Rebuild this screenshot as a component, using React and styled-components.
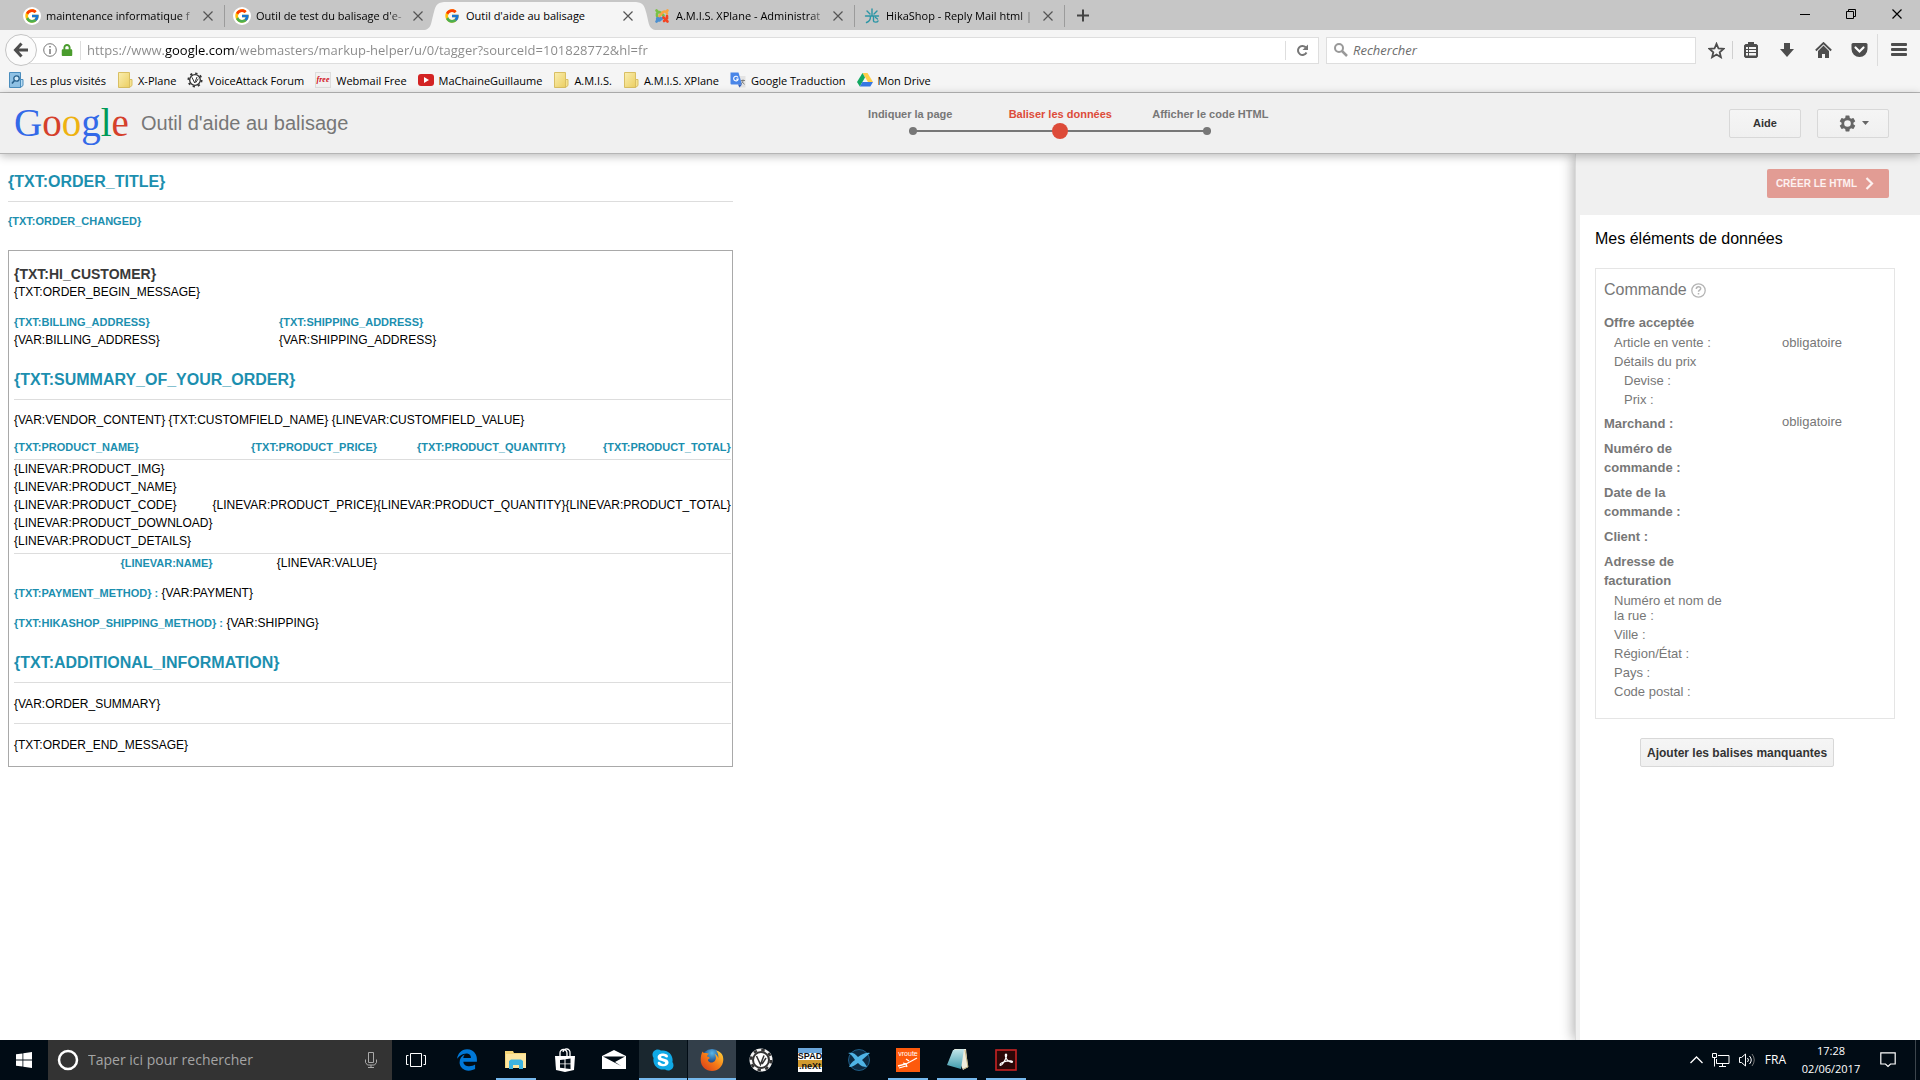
import React, { useState } from 'react';
import styled, { createGlobalStyle, css } from 'styled-components';
import { FcGoogle } from 'react-icons/fc';
import { FaSkype, FaLock } from 'react-icons/fa';
import { FaEdgeLegacy } from 'react-icons/fa6';

// --- THEME ---
const THEME = {
    chrome: '#f5f5f5',
    tabStrip: '#c6c6c6',
    icon: '#4d4d4d',
    teal: '#1c8faf',
    grey: '#777777',
    red: '#dd4b39',
    line: '#dddddd',
    taskbar: '#010c15',
    ui: "'Open Sans', 'Noto Sans', sans-serif",
    page: "'Liberation Sans', Arial, sans-serif"
};

const GlobalStyle = createGlobalStyle`
    * { box-sizing: border-box; }
    body { margin: 0; font-family: ${THEME.page}; font-size: 12px; background: #fff; }
    button { font: inherit; color: inherit; background: none; border: 0; padding: 0; cursor: pointer; }
    input { font: inherit; border: 0; outline: 0; padding: 0; background: none; min-width: 0; }
    a { color: inherit; text-decoration: none; }
    h1, h2, h3, p { margin: 0; }
    svg { display: block; flex: none; }
`;

const Screen = styled.div`
    display: flex;
    flex-direction: column;
    min-height: 100vh;
`;

// --- BROWSER CHROME ---
const TabStrip = styled.div`
    display: flex;
    height: 30px;
    padding-left: 15px;
    background: ${THEME.tabStrip};
    font: 11px ${THEME.ui};
`;

const Tab = styled.div`
    position: relative;
    display: flex;
    align-items: center;
    gap: 6px;
    width: 210px;
    padding: 1px 12px 0 9px;
    ${({ $divider }) => $divider && css`
        background: linear-gradient(#9b9b9b, #9b9b9b) right 5px / 1px 22px no-repeat;
    `}
    ${({ $active }) => $active && css`
        z-index: 1;
        &::before {
            content: '';
            position: absolute;
            inset: 2px 11px 0;
            background: ${THEME.chrome};
        }
    `}
    > * { position: relative; }
`;

const TabEdge = styled.svg`
    && { position: absolute; top: 2px; }
    ${({ $side }) => ($side === 'left' ? 'left: -12px;' : 'right: -12px; transform: scaleX(-1);')}
`;

const TabTitle = styled.button`
    flex: 1;
    overflow: hidden;
    white-space: nowrap;
    text-align: left;
    ${({ $fade }) => $fade && 'mask-image: linear-gradient(90deg, #000 88%, transparent);'}
`;

const GoogleFavicon = styled(FcGoogle)`
    border-radius: 50%;
    background: #fff;
    box-shadow: 0 0 0 1px #fff;
`;

const WindowButtons = styled.div`
    display: flex;
    align-items: flex-start;
    margin-left: auto;
    button { display: grid; place-items: center; width: 46px; height: 28px; }
`;

const Toolbar = styled.div`
    display: flex;
    align-items: center;
    height: 40px;
    padding: 0 1px 0 5px;
    background: ${THEME.chrome};
    font: 13px ${THEME.ui};
    color: ${THEME.icon};
`;

const BackButton = styled.button`
    display: grid;
    place-items: center;
    width: 32px;
    height: 32px;
    border: 1px solid #c4c4c4;
    border-radius: 50%;
    background: #fbfbfb;
    z-index: 1;
`;

const Field = styled.label`
    display: flex;
    align-items: center;
    height: 27px;
    border: 1px solid #dedede;
    background: #fff;
`;

const AddressField = styled(Field)`
    flex: 1;
    gap: 7px;
    margin-left: -10px;
    padding-left: 15px;
    svg + svg { margin-left: -3px; }
`;

// The gradient paints the domain darker than the rest of the address
const Address = styled.input`
    flex: 1;
    padding-left: 6px;
    border-left: 1px solid #dedede;
    color: transparent;
    caret-color: #000;
    background: linear-gradient(90deg, #888 83px, #000 83px 153px, #888 153px);
    background-clip: text;
    line-height: 19px;
`;

const Reload = styled.button`
    display: grid;
    place-items: center;
    width: 33px;
    height: 19px;
    border-left: 1px solid #dedede;
`;

const SearchField = styled(Field)`
    width: 370px;
    margin-left: 7px;
    padding: 0 7px;
    gap: 5px;
    input { flex: 1; }
    input::placeholder { color: #6d6d6d; font-style: italic; opacity: 1; }
`;

const ToolIcons = styled.div`
    display: flex;
    align-items: center;
    padding-left: 5px;
    button { display: grid; place-items: center; width: 36px; height: 32px; }
    button:first-child { width: 32px; border-right: 1px solid #d0d0d0; height: 18px; }
    button:last-child { width: 42px; border-left: 1px solid #dcdcdc; }
`;

const Bookmarks = styled.nav`
    display: flex;
    align-items: center;
    gap: 11px;
    height: 23px;
    padding: 0 9px 2px;
    background: ${THEME.chrome};
    border-bottom: 1px solid #b9b9b9;
    font: 11px ${THEME.ui};
    a { display: flex; align-items: center; gap: 5px; height: 20px; }
`;

// --- MARKUP HELPER HEADER ---
const AppHeader = styled.header`
    position: relative;
    z-index: 2;
    display: flex;
    align-items: center;
    height: 61px;
    padding: 0 31px 0 14px;
    background: #f0f0f0;
    border-bottom: 1px solid #b5b5b5;
    box-shadow: 0 2px 9px rgba(0, 0, 0, 0.28);
`;

const Logo = styled.a`
    width: 127px;
    font: 39px/48px 'Liberation Serif', serif;
    color: #3369e8;
    i { font-style: normal; color: #d5402b; }
    b { font-weight: normal; color: #eeb211; }
    em { font-style: normal; color: #009a57; }
`;

const AppTitle = styled.h1`
    font-size: 20px;
    font-weight: normal;
    color: ${THEME.grey};
`;

const Stepper = styled.div`
    width: 450px;
    margin: 0 auto 0 487px;
    font-size: 11px;
    font-weight: bold;
    color: ${THEME.grey};
`;

const StepLabels = styled.ol`
    display: grid;
    grid-template-columns: repeat(3, 1fr);
    margin: 0;
    padding: 0;
    list-style: none;
    text-align: center;
    white-space: nowrap;
    line-height: 14px;
`;

const StepLabel = styled.li`
    color: ${({ $current }) => ($current ? THEME.red : 'inherit')};
`;

const StepTrack = styled.div`
    display: flex;
    align-items: center;
    justify-content: space-between;
    width: 302px;
    height: 18px;
    margin: 1px auto 0;
    background: linear-gradient(${THEME.grey}, ${THEME.grey}) center / 100% 2px no-repeat;
`;

const StepDot = styled.span`
    width: ${({ $current }) => ($current ? 16 : 8)}px;
    height: ${({ $current }) => ($current ? 16 : 8)}px;
    border-radius: 50%;
    background: ${({ $current }) => ($current ? THEME.red : THEME.grey)};
`;

const GreyButton = styled.button`
    display: inline-flex;
    align-items: center;
    justify-content: center;
    gap: 5px;
    min-width: 72px;
    height: 29px;
    padding: 0 6px;
    border: 1px solid #d8d8d8;
    border-radius: 2px;
    background: linear-gradient(#f5f5f5, #f0f0f0);
    font-size: 11px;
    font-weight: bold;
    color: #333;
`;

const AddTagsButton = styled(GreyButton)`
    margin-left: 45px;
    font-size: 12px;
`;

const HeaderActions = styled.div`
    display: flex;
    gap: 16px;
`;

// --- TAGGED PAGE ---
const Workspace = styled.div`
    display: flex;
    flex: 1;
`;

const Mail = styled.main`
    flex: 1;
    padding: 17px 8px 16px;
    line-height: 18px;
`;

const MailBody = styled.div`
    width: fit-content;
    min-width: 721px;
`;

const Heading = styled.h2`
    padding-bottom: 8px;
    border-bottom: 1px solid ${THEME.line};
    font-size: 16px;
    line-height: 22px;
    color: ${THEME.teal};
`;

const Lead = styled.p`
    margin: 10px 0 20px;
`;

const Token = styled.strong`
    font-size: 11px;
    color: ${THEME.teal};
`;

const Frame = styled.section`
    padding: 14px 1px 2px 5px;
    border: 1px solid #a9a9a9;
`;

const Greeting = styled.h3`
    font-size: 14px;
    line-height: 18px;
    color: #393939;
`;

const Addresses = styled.div`
    display: grid;
    grid-template-columns: 265px 1fr;
    margin: 12px 0 20px;
    p { display: flex; flex-direction: column; }
`;

const Paragraph = styled.p`
    margin: 11px 0 12px;
`;

const Method = styled.p`
    margin-bottom: 12px;
    & + h2 { margin-top: 20px; }
`;

const Divided = styled.p`
    padding: 12px 0 10px;
    & + & { border-top: 1px solid ${THEME.line}; }
`;

const Products = styled.table`
    width: 100%;
    margin: -3px 0 12px;
    border-collapse: collapse;
    white-space: nowrap;
    th, td { padding: 0; text-align: right; }
    th { font-size: 11px; color: ${THEME.teal}; }
    thead th { padding-bottom: 3px; }
    th:first-child, tbody td:first-child { text-align: left; }
    tbody td { border: 1px solid ${THEME.line}; border-width: 1px 0; padding-bottom: 3px; }
    tfoot th:first-child { text-align: right; }
`;

// --- SIDEBAR ---
const Sidebar = styled.aside`
    display: flex;
    flex-direction: column;
    width: 345px;
    padding-left: 4px;
    background: #f0f0f0;
    border-left: 1px solid #dadada;
    box-shadow: -2px 0 12px rgba(0, 0, 0, 0.3);
`;

const SidebarTop = styled.div`
    display: flex;
    justify-content: flex-end;
    padding: 15px 31px 17px;
`;

const CreateButton = styled.button`
    display: flex;
    align-items: center;
    gap: 8px;
    height: 29px;
    padding: 0 15px 0 9px;
    border-radius: 2px;
    background: #e29c94;
    font-size: 10px;
    font-weight: bold;
    color: #fdf1f0;
`;

const Panel = styled.div`
    flex: 1;
    padding: 13px 25px 0 15px;
    background: #fff;
    color: ${THEME.grey};
`;

const PanelTitle = styled.h2`
    margin-bottom: 18px;
    font-size: 16px;
    font-weight: normal;
    line-height: 22px;
    color: #000;
`;

const DataCard = styled.div`
    margin-bottom: 19px;
    padding: 10px 9px 17px 8px;
    border: 1px solid #e5e5e5;
    h3 {
        display: flex;
        align-items: center;
        gap: 4px;
        margin-bottom: 12px;
        font-size: 16px;
        font-weight: normal;
        line-height: 22px;
    }
`;

const DataRow = styled.div`
    display: grid;
    grid-template-columns: 178px 1fr;
    font-size: 13px;
    line-height: 15px;
    padding: 2px 0;
    ${({ $level }) => $level === 0 && css`
        margin-top: 5px;
        padding: 0 0 1px;
        line-height: 19px;
        font-weight: bold;
    `}
    > span:first-child {
        padding-left: ${({ $level }) => $level * 10}px;
        padding-right: ${({ $level }) => ($level ? 50 : 70)}px;
    }
`;

const Required = styled.span`
    font-weight: normal;
    line-height: 15px;
`;

// --- TASKBAR ---
const Taskbar = styled.footer`
    position: relative;
    z-index: 3;
    display: flex;
    height: 40px;
    background: ${THEME.taskbar};
    color: #fff;
    font: 11px/18px ${THEME.ui};
`;

const StartButton = styled.button`
    display: grid;
    place-items: center;
    width: 48px;
`;

const TaskSearch = styled.label`
    display: flex;
    align-items: center;
    gap: 9px;
    width: 344px;
    padding: 0 15px 0 9px;
    background: #333;
    font-size: 14px;
    input { flex: 1; color: #fff; }
    input::placeholder { color: #a5a5a5; opacity: 1; }
`;

const TaskButton = styled.button`
    display: grid;
    place-items: center;
    width: 48px;
    margin-right: 1px;
    background:
        linear-gradient(#76b9ed, #76b9ed) bottom / ${({ $state }) => ($state ? ($state === 'open' ? '40px' : '48px') : '0')} 2px no-repeat,
        ${({ $state }) => ({ focus: '#333f4a', flash: '#1a272f' }[$state] || 'transparent')};
`;

const TaskViewButton = styled(TaskButton)`
    margin-right: 3px;
`;

const Skype = styled(FaSkype)`
    color: #10a9e6;
    background: radial-gradient(#fff 50%, transparent 51%);
`;

const Tray = styled.div`
    display: flex;
    align-items: center;
    margin-left: auto;
    gap: 9px;
    padding-right: 4px;
`;

const Language = styled.span`
    font-size: 12px;
`;

const Clock = styled.time`
    width: 72px;
    text-align: center;
`;

const Notifications = styled.button`
    width: 40px;
    height: 40px;
    display: grid;
    place-items: center;
    padding-right: 15px;
    border-right: 1px solid #3c454c;
`;

// --- ICONS ---
const Cross = ({ size = 10, color = '#555' }) => (
    <svg width={size} height={size} viewBox="0 0 10 10" stroke={color} strokeWidth="1.2">
        <path d="M0.5 0.5l9 9M9.5 0.5l-9 9" />
    </svg>
);

const Folder = () => (
    <svg width="16" height="16" viewBox="0 0 16 16">
        <defs>
            <linearGradient id="folder" x1="0" y1="0" x2="1" y2="1">
                <stop offset="0" stopColor="#faeeb0" />
                <stop offset="1" stopColor="#eccf62" />
            </linearGradient>
        </defs>
        <path d="M1.5 .5h11v15h-11z" fill="url(#folder)" stroke="#d9bf63" />
        <path d="M12.5 7.5h2.5v6l-2.500 2z" fill="#f6e391" stroke="#d9bf63" />
    </svg>
);

const MostVisited = () => (
    <svg width="16" height="16" viewBox="0 0 16 16">
        <path d="M.5 .5h11v15H.5z" fill="#8fc1e4" stroke="#4a8dbd" />
        <path d="M11.5 7.5H14v6l-2.5 2z" fill="#b9dcf2" stroke="#4a8dbd" />
        <circle cx="7.5" cy="6.5" r="2.7" fill="#cfe8f8" stroke="#255f8b" strokeWidth="1.3" />
        <path d="M5.500 8.500L3 11.500" stroke="#255f8b" strokeWidth="1.6" />
    </svg>
);

const VoiceGear = ({ size = 16, light }) => (
    <svg width={size} height={size} viewBox="0 0 24 24">
        {light && <circle cx="12" cy="12" r="11.5" fill="#f4f4f4" />}
        <circle cx="12" cy="12" r="8" fill="#fff" stroke="#333" strokeWidth="2" />
        <circle cx="12" cy="12" r="10" fill="none" stroke="#333" strokeWidth="2.6" strokeDasharray="3.4 4.45" />
        <path d="M7.5 8l4 8.5L15 7.5M13 16l4-6" fill="none" stroke="#333" strokeWidth="1.5" />
    </svg>
);

const FreeMail = () => (
    <svg width="16" height="16" viewBox="0 0 16 16">
        <rect x="0.5" y="0.5" width="15" height="15" fill="#f1f1f1" stroke="#ddd" />
        <text x="8" y="10" textAnchor="middle" fontFamily="Liberation Serif, serif" fontSize="8" fontStyle="italic" fontWeight="bold" fill="#d1121c">free</text>
    </svg>
);

const YouTube = () => (
    <svg width="16" height="16" viewBox="0 0 16 16">
        <rect y="2" width="16" height="12" rx="3" fill="#d32323" />
        <path d="M6 5l5 3-5 3z" fill="#fff" />
    </svg>
);

const Translate = () => (
    <svg width="16" height="16" viewBox="0 0 16 16">
        <path d="M6 4h9.5v11.5H9z" fill="#e3e3e3" />
        <path d="M0.5 0.5h8l3.5 12H1.5a1 1 0 0 1-1-1z" fill="#4a86e8" />
        <path d="M8 12.5h4L9.5 15.5z" fill="#3560bb" />
        <path d="M8 5.5a2.3 2.3 0 1 0 .2 1.6H6.2" fill="none" stroke="#fff" strokeWidth="1.1" />
        <path d="M11 8.5h4M13 7.5v1c0 2-1.5 3-2 3.5M12 9.5l2.5 3" stroke="#777" fill="none" strokeWidth=".9" />
    </svg>
);

const Drive = () => (
    <svg width="16" height="16" viewBox="0 0 16 16">
        <path d="M5.500 1h5l5.500 9h-5z" fill="#ffcf48" />
        <path d="M5.500 1L8 5.500 2.800 14.500 0 10z" fill="#11a861" />
        <path d="M5.400 10H16l-2.700 4.500H2.800z" fill="#3777e3" />
    </svg>
);

const Joomla = () => (
    <svg width="16" height="16" viewBox="0 0 16 16" fill="none" strokeWidth="2.6" strokeLinecap="round">
        <path d="M2.500 13.500L6 10M3.500 9.500c-1 2 0 3 2 3l3-2.500" stroke="#4c8fcf" />
        <path d="M3 8V5.500a2.500 2.500 0 0 1 3.500-1l3 3M2.500 2.500l1 1" stroke="#7ac143" />
        <path d="M12.500 3.500l1-1M5.500 8l3.500-4a2.500 2.500 0 0 1 4 1.500" stroke="#f9a541" />
        <path d="M9.500 9.500l4 4M13 8v2.500l-3 2.500" stroke="#f44321" />
    </svg>
);

const Hika = () => (
    <svg width="16" height="16" viewBox="0 0 16 16" fill="none" stroke="#2b95a5" strokeWidth="1.4" strokeLinecap="round">
        <path d="M8 1v6M3 3l3 3M13 3l-3 3M1.500 8h13M6.500 8.500c0 3-1 5-4 6M9.500 8.500v4.500c0 1.500 4 1.500 4.500 0M11.500 9.500l2 1.500" />
    </svg>
);

const Gear = () => (
    <svg width="19" height="19" viewBox="0 0 24 24" fill="#666">
        <path fillRule="evenodd" d="M19.43 12.98c.04-.32.07-.64.07-.98s-.03-.66-.07-.98l2.11-1.65c.19-.15.24-.42.12-.64l-2-3.46c-.12-.22-.39-.3-.61-.22l-2.49 1c-.52-.4-1.08-.73-1.69-.98l-.38-2.65A.49.49 0 0 0 14 2h-4c-.25 0-.46.18-.49.42l-.38 2.65c-.61.25-1.17.59-1.69.98l-2.49-1c-.23-.09-.49 0-.61.22l-2 3.46c-.13.22-.07.49.12.64l2.11 1.65c-.04.32-.07.65-.07.98s.03.66.07.98l-2.11 1.65c-.19.15-.24.42-.12.64l2 3.46c.12.22.39.3.61.22l2.49-1c.52.4 1.08.73 1.69.98l.38 2.65c.03.24.24.42.49.42h4c.25 0 .46-.18.49-.42l.38-2.65c.61-.25 1.17-.59 1.69-.98l2.49 1c.23.09.49 0 .61-.22l2-3.46c.12-.22.07-.49-.12-.64zM12 16.2a4.2 4.2 0 1 1 0-8.400 4.2 4.2 0 0 1 0 8.400z" />
    </svg>
);

const WindowsLogo = () => (
    <svg width="16" height="16" viewBox="0 0 16 16" fill="#fff">
        <path d="M0 2.3l6.500-.9v6.200H0zM7.300 1.300L16 0v7.600H7.300zM0 8.400h6.500v6.200L0 13.700zM7.300 8.400H16V16l-8.700-1.300z" />
    </svg>
);

const Explorer = () => (
    <svg width="22" height="20" viewBox="0 0 22 20">
        <path d="M0 1h8l1 2h12v15H0z" fill="#f5d576" />
        <path d="M1 4h20v14H1z" fill="#fde6a0" />
        <path d="M4 19v-8l2-1.500h10l2 1.500v8h-4v-4H8v4z" fill="#3db4e0" />
    </svg>
);

const Store = () => (
    <svg width="20" height="24" viewBox="0 0 20 24">
        <path d="M5 8V5a3.500 3.500 0 0 1 7 0v3M8 4a3.500 3.500 0 0 1 7 1v3" fill="none" stroke="#fff" strokeWidth="1.3" />
        <path d="M0 8h20l-1 14-9 2-9-2z" fill="#fff" />
        <path d="M5 12l4.500-.6v4H5zM10.500 11.300l5-.7v4.800h-5zM5 16.300h4.500v4L5 19.700zM10.500 16.300h5v4.800l-5-.7z" fill={THEME.taskbar} />
    </svg>
);

const MailApp = () => (
    <svg width="24" height="20" viewBox="0 0 24 20">
        <path d="M0 6l12-6 12 6v13H0z" fill="#fff" />
        <path d="M1 6.500h22L13 12l6 4-18-9.500z" fill={THEME.taskbar} />
    </svg>
);

const Firefox = () => (
    <svg width="24" height="24" viewBox="0 0 24 24">
        <defs>
            <linearGradient id="fox" x1="0" y1="1" x2="1" y2="0">
                <stop offset="0" stopColor="#d6341b" />
                <stop offset=".5" stopColor="#f47a17" />
                <stop offset="1" stopColor="#ffd83a" />
            </linearGradient>
            <radialGradient id="globe" cx=".5" cy=".2">
                <stop offset="0" stopColor="#59b8e8" />
                <stop offset="1" stopColor="#123a7c" />
            </radialGradient>
        </defs>
        <circle cx="12" cy="11.5" r="10.5" fill="url(#globe)" />
        <path d="M2.500 3.500c.5 1 1.500 1.500 3 1.500 1 0 2 .5 3.500.5-.5 1-2 1.500-2 3 2 0 3 1 2.500 2-1.500.5-2 1.500-1 2.800 2 2.200 5 1.200 6.500-.5 1.500-2 1-5-.5-7 2.500 1 3.500 3 3.700 4.500.6-3-.5-6-2.200-7.800C21 3.500 23.500 7 23.300 12c-.3 6.500-5.300 11-11.300 11S.7 18.500.7 12c0-3 .5-6 1.800-8.500z" fill="url(#fox)" />
    </svg>
);

const Spad = () => (
    <svg width="24" height="24" viewBox="0 0 24 24">
        <rect width="24" height="24" fill="#fff" />
        <rect width="24" height="5" fill="#6ba7dc" />
        <rect y="12" width="24" height="7" fill="#d19a2e" />
        <g fontFamily="Liberation Sans, sans-serif" fontWeight="bold" textAnchor="middle" fill="#111">
            <text x="12" y="11" fontSize="9">SPAD</text>
            <text x="12" y="21" fontSize="9">.neXt</text>
        </g>
    </svg>
);

const XPlane = () => (
    <svg width="24" height="24" viewBox="0 0 24 24">
        <circle cx="12" cy="12" r="10.5" fill="#0c2a42" stroke="#1e5d85" />
        <path d="M1 5c4-1 7 0 10 4 3-2 7-5 12-4l-8 7c3 3 4 5 5 7-4 0-6-1-9-4-3 2-5 4-9 4 1-3 3-5 6-7C6 9 4 6 1 5z" fill="#4fb4e6" />
    </svg>
);

const IRoute = () => (
    <svg width="24" height="24" viewBox="0 0 24 24">
        <rect width="24" height="24" fill="#fd5a0c" />
        <text x="12" y="8" textAnchor="middle" fontFamily="Liberation Sans, sans-serif" fontSize="7" fill="#fff">vroute</text>
        <path d="M2 18l8-2 11-6M7 15l3 1 1 3M13 13l-3-2M3 20l7-2" stroke="#fff" strokeWidth="1.3" fill="none" />
    </svg>
);

const Notepad = () => (
    <svg width="24" height="24" viewBox="0 0 24 24">
        <defs>
            <linearGradient id="sheet" x1="0" y1="0" x2="0" y2="1">
                <stop offset="0" stopColor="#c4e6ea" />
                <stop offset="1" stopColor="#3f9cae" />
            </linearGradient>
        </defs>
        <path d="M9 1h12l2 18-5 3z" fill="#efecdc" />
        <path d="M8 2l11-1-3 20-14-4z" fill="url(#sheet)" />
        <path d="M20 2l3 17-5 2" fill="none" stroke="#c4b582" />
    </svg>
);

const Acrobat = () => (
    <svg width="22" height="22" viewBox="0 0 22 22">
        <rect x="1" y="1" width="20" height="20" fill="#2a0707" stroke="#c62323" strokeWidth="1.6" />
        <path d="M5 16c1 1 3-1 5-5s2-6 1-6-1 3 1 5.500 5 3.500 5.500 2.500-3-1.500-6-.8S5 14 5 16z" fill="none" stroke="#fff" strokeWidth="1.2" />
    </svg>
);

const TABS = [
    { title: 'maintenance informatique f', icon: <GoogleFavicon size={16} />, divider: true, fade: true },
    { title: "Outil de test du balisage d'e-", icon: <GoogleFavicon size={16} />, fade: true },
    { title: "Outil d'aide au balisage", icon: <FcGoogle size={16} />, active: true },
    { title: 'A.M.I.S. XPlane - Administrat', icon: <Joomla />, divider: true, fade: true },
    { title: 'HikaShop - Reply Mail html |', icon: <Hika />, divider: true, fade: true }
];

const BOOKMARKS = [
    ['Les plus visités', <MostVisited />],
    ['X-Plane', <Folder />],
    ['VoiceAttack Forum', <VoiceGear />],
    ['Webmail Free', <FreeMail />],
    ['MaChaineGuillaume', <YouTube />],
    ['A.M.I.S.', <Folder />],
    ['A.M.I.S. XPlane', <Folder />],
    ['Google Traduction', <Translate />],
    ['Mon Drive', <Drive />]
];

const STEPS = ['Indiquer la page', 'Baliser les données', 'Afficher le code HTML'];

// [indentation level, label, required]
const ROWS = [
    [0, 'Offre acceptée'],
    [1, 'Article en vente :', true],
    [1, 'Détails du prix'],
    [2, 'Devise :'],
    [2, 'Prix :'],
    [0, 'Marchand :', true],
    [0, 'Numéro de commande :'],
    [0, 'Date de la commande :'],
    [0, 'Client :'],
    [0, 'Adresse de facturation'],
    [1, 'Numéro et nom de la rue :'],
    [1, 'Ville :'],
    [1, 'Région/État :'],
    [1, 'Pays :'],
    [1, 'Code postal :']
];

const TASKS = [
    ['Microsoft Edge', <FaEdgeLegacy size={22} color="#0078d7" />],
    ['Explorateur', <Explorer />, 'open'],
    ['Store', <Store />],
    ['Courrier', <MailApp />],
    ['Skype', <Skype size={24} />, 'flash'],
    ['Firefox', <Firefox />, 'focus'],
    ['VoiceAttack', <VoiceGear size={24} light />],
    ['SPAD.neXt', <Spad />],
    ['X-Plane', <XPlane />],
    ['vroute', <IRoute />, 'open'],
    ['Bloc-notes', <Notepad />, 'open'],
    ['Acrobat Reader', <Acrobat />, 'open']
];

const Browser = () => {
    const [url, setUrl] = useState('https://www.google.com/webmasters/markup-helper/u/0/tagger?sourceId=101828772&hl=fr');

    return (
        <>
            <TabStrip>
                {TABS.map((tab) => (
                    <Tab key={tab.title} $active={tab.active} $divider={tab.divider}>
                        {tab.active && ['left', 'right'].map((side) => (
                            <TabEdge key={side} $side={side} width="24" height="28" viewBox="0 0 24 28">
                                <path d="M0 28C9 28 8 20 11 10 13 2 15 0 24 0v28z" fill={THEME.chrome} />
                            </TabEdge>
                        ))}
                        {tab.icon}
                        <TabTitle $fade={tab.fade}>{tab.title}</TabTitle>
                        <button aria-label="Fermer l'onglet"><Cross /></button>
                    </Tab>
                ))}
                <button aria-label="Nouvel onglet">
                    <svg width="36" height="13" viewBox="0 0 36 13" stroke="#444" strokeWidth="2"><path d="M12 6.500h12M18 .5v12" /></svg>
                </button>
                <WindowButtons>
                    <button aria-label="Réduire"><svg width="10" height="10"><path d="M0 5.500h10" stroke="#000" /></svg></button>
                    <button aria-label="Restaurer">
                        <svg width="10" height="10" fill="none" stroke="#000"><path d="M.5 2.500h7v7h-7zM2.500 2.500v-2h7v7h-2" /></svg>
                    </button>
                    <button aria-label="Fermer"><Cross color="#000" /></button>
                </WindowButtons>
            </TabStrip>
            <Toolbar>
                <BackButton aria-label="Précédent">
                    <svg width="16" height="16" viewBox="0 0 16 16" fill="none" stroke="#4d4d4d" strokeWidth="3"><path d="M8.500 1.500L2.500 8l6 6.500M3 8h12" /></svg>
                </BackButton>
                <AddressField>
                    <svg width="14" height="14" viewBox="0 0 14 14" fill="none" stroke="#777"><circle cx="7" cy="7" r="6.3" /><path d="M7 3v1.500M7 6v5" strokeWidth="1.5" /></svg>
                    <FaLock size={12} color="#4a9c2d" />
                    <Address aria-label="Adresse" value={url} onChange={(e) => setUrl(e.target.value)} />
                    <Reload aria-label="Actualiser">
                        <svg width="13" height="13" viewBox="0 0 13 13" fill="none" stroke="#777" strokeWidth="2"><path d="M10.500 8.500a4.500 4.500 0 1 1-.8-5.200" /><path d="M12 .5v5.500H6.500z" fill="#777" stroke="none" /></svg>
                    </Reload>
                </AddressField>
                <SearchField>
                    <svg width="14" height="14" viewBox="0 0 14 14" fill="none" stroke="#999" strokeWidth="2"><circle cx="5" cy="5" r="4" /><path d="M8 8l5 5" strokeWidth="2.5" /></svg>
                    <input aria-label="Rechercher" placeholder="Rechercher" />
                </SearchField>
                <ToolIcons>
                    <button aria-label="Marquer cette page"><svg width="17" height="17" viewBox="0 0 17 17" fill="none" stroke={THEME.icon} strokeWidth="1.8"><path d="M8.500 1.800l2 4.700 5 .4-3.800 3.300 1.200 5-4.400-2.700-4.400 2.700 1.200-5L1.500 6.900l5-.4z" /></svg></button>
                    <button aria-label="Marque-pages"><svg width="16" height="16" viewBox="0 0 16 16" fill={THEME.icon} fillRule="evenodd"><path d="M5 2V0h6v2h2.500l1.500 1.500v11L13.500 16h-11L1 14.500v-11L2.500 2zM3 5v2h2V5zm3 0v2h7V5zM3 8v2h2V8zm3 0v2h7V8zm-3 3v2.500h2V11zm3 0v2.500h7V11z" /></svg></button>
                    <button aria-label="Téléchargements"><svg width="16" height="16" viewBox="0 0 16 16" fill={THEME.icon}><path d="M5 1h6v6h4l-7 8-7-8h4z" /></svg></button>
                    <button aria-label="Accueil"><svg width="17" height="16" viewBox="0 0 17 16"><path d="M3 9l5.500-5.500L14 9v7h-4v-4H7v4H3z" fill={THEME.icon} /><path d="M.8 8.500L8.500 1l7.700 7.500" fill="none" stroke={THEME.icon} strokeWidth="1.8" /></svg></button>
                    <button aria-label="Pocket"><svg width="17" height="16" viewBox="0 0 17 16"><path d="M2 1h13q1.500 0 1.500 1.500V7a8 8 0 0 1-16 0V2.500Q.5 1 2 1z" fill={THEME.icon} /><path d="M4.500 5.500l4 4 4-4" fill="none" stroke="#fff" strokeWidth="2.2" strokeLinecap="round" /></svg></button>
                    <button aria-label="Menu"><svg width="16" height="14" fill={THEME.icon}><rect width="16" height="3" rx="1" /><rect y="5" width="16" height="3" rx="1" /><rect y="10" width="16" height="3" rx="1" /></svg></button>
                </ToolIcons>
            </Toolbar>
            <Bookmarks>
                {BOOKMARKS.map(([label, icon]) => <a key={label} href="#">{icon}{label}</a>)}
            </Bookmarks>
        </>
    );
};

const OrderMail = () => (
    <Mail>
        <MailBody>
            <Heading>{'{TXT:ORDER_TITLE}'}</Heading>
            <Lead><Token>{'{TXT:ORDER_CHANGED}'}</Token></Lead>
            <Frame>
                <Greeting>{'{TXT:HI_CUSTOMER}'}</Greeting>
                <p>{'{TXT:ORDER_BEGIN_MESSAGE}'}</p>
                <Addresses>
                    <p><Token>{'{TXT:BILLING_ADDRESS}'}</Token>{'{VAR:BILLING_ADDRESS}'}</p>
                    <p><Token>{'{TXT:SHIPPING_ADDRESS}'}</Token>{'{VAR:SHIPPING_ADDRESS}'}</p>
                </Addresses>
                <Heading>{'{TXT:SUMMARY_OF_YOUR_ORDER}'}</Heading>
                <Paragraph>{'{VAR:VENDOR_CONTENT} {TXT:CUSTOMFIELD_NAME} {LINEVAR:CUSTOMFIELD_VALUE}'}</Paragraph>
                <Products>
                    <thead>
                        <tr>
                            <th>{'{TXT:PRODUCT_NAME}'}</th>
                            <th>{'{TXT:PRODUCT_PRICE}'}</th>
                            <th>{'{TXT:PRODUCT_QUANTITY}'}</th>
                            <th>{'{TXT:PRODUCT_TOTAL}'}</th>
                        </tr>
                    </thead>
                    <tbody>
                        <tr>
                            <td>
                                {'{LINEVAR:PRODUCT_IMG}'}<br />
                                {'{LINEVAR:PRODUCT_NAME}'}<br />
                                {'{LINEVAR:PRODUCT_CODE}'}<br />
                                {'{LINEVAR:PRODUCT_DOWNLOAD}'}<br />
                                {'{LINEVAR:PRODUCT_DETAILS}'}
                            </td>
                            <td>{'{LINEVAR:PRODUCT_PRICE}'}</td>
                            <td>{'{LINEVAR:PRODUCT_QUANTITY}'}</td>
                            <td>{'{LINEVAR:PRODUCT_TOTAL}'}</td>
                        </tr>
                    </tbody>
                    <tfoot>
                        <tr>
                            <th>{'{LINEVAR:NAME}'}</th>
                            <td>{'{LINEVAR:VALUE}'}</td>
                            <td />
                            <td />
                        </tr>
                    </tfoot>
                </Products>
                <Method><Token>{'{TXT:PAYMENT_METHOD} :'}</Token> {'{VAR:PAYMENT}'}</Method>
                <Method><Token>{'{TXT:HIKASHOP_SHIPPING_METHOD} :'}</Token> {'{VAR:SHIPPING}'}</Method>
                <Heading>{'{TXT:ADDITIONAL_INFORMATION}'}</Heading>
                <Divided>{'{VAR:ORDER_SUMMARY}'}</Divided>
                <Divided>{'{TXT:ORDER_END_MESSAGE}'}</Divided>
            </Frame>
        </MailBody>
    </Mail>
);

const App = () => (
    <Screen>
        <GlobalStyle />
        <Browser />
        <AppHeader>
            <Logo href="#">G<i>o</i><b>o</b>g<em>l</em><i>e</i></Logo>
            <AppTitle>Outil d'aide au balisage</AppTitle>
            <Stepper>
                <StepLabels>
                    {STEPS.map((step, i) => <StepLabel key={step} $current={i === 1}>{step}</StepLabel>)}
                </StepLabels>
                <StepTrack>
                    {STEPS.map((step, i) => <StepDot key={step} $current={i === 1} />)}
                </StepTrack>
            </Stepper>
            <HeaderActions>
                <GreyButton>Aide</GreyButton>
                <GreyButton aria-label="Paramètres">
                    <Gear />
                    <svg width="7" height="4"><path d="M0 0h7L3.500 4z" fill="#666" /></svg>
                </GreyButton>
            </HeaderActions>
        </AppHeader>
        <Workspace>
            <OrderMail />
            <Sidebar>
                <SidebarTop>
                    <CreateButton>
                        CRÉER LE HTML
                        <svg width="9" height="13" viewBox="0 0 9 13" fill="none" stroke="#fdf1f0" strokeWidth="2.2"><path d="M1.500 1l5.500 5.500L1.500 12" /></svg>
                    </CreateButton>
                </SidebarTop>
                <Panel>
                    <PanelTitle>Mes éléments de données</PanelTitle>
                    <DataCard>
                        <h3>
                            Commande
                            <svg width="15" height="15" viewBox="0 0 15 15" fill="none" stroke="#b5b5b5" strokeWidth="1.3"><circle cx="7.5" cy="7.5" r="6.7" /><path d="M5.300 6c0-3 4.400-3 4.400-.4 0 1.600-2.200 1.600-2.200 3.200M7.500 10v1.500" strokeWidth="1.5" /></svg>
                        </h3>
                        {ROWS.map(([level, label, required]) => (
                            <DataRow key={label} $level={level}>
                                <span>{label}</span>
                                {required && <Required>obligatoire</Required>}
                            </DataRow>
                        ))}
                    </DataCard>
                    <AddTagsButton>Ajouter les balises manquantes</AddTagsButton>
                </Panel>
            </Sidebar>
        </Workspace>
        <Taskbar>
            <StartButton aria-label="Démarrer"><WindowsLogo /></StartButton>
            <TaskSearch>
                <svg width="22" height="22"><circle cx="11" cy="11" r="9" fill="none" stroke="#fff" strokeWidth="2.5" /></svg>
                <input aria-label="Rechercher dans Windows" placeholder="Taper ici pour rechercher" />
                <svg width="12" height="16" viewBox="0 0 12 16" fill="none" stroke="#aaa"><path d="M3.500.5h5v10h-5zM.5 7.500v3l2 2.500h7l2-2.500v-3M6 13v2.500M3 15.500h6" /></svg>
            </TaskSearch>
            <TaskViewButton aria-label="Affichage des tâches">
                <svg width="20" height="14" fill="none" stroke="#fff"><path d="M4.500.5h11v13h-11zM2.500 2.500h-2v9h2M17.500 2.500h2v9h-2" /></svg>
            </TaskViewButton>
            {TASKS.map(([name, icon, state]) => <TaskButton key={name} aria-label={name} $state={state}>{icon}</TaskButton>)}
            <Tray>
                <svg width="13" height="8" fill="none" stroke="#fff" strokeWidth="1.3"><path d="M.5 7l6-6 6 6" /></svg>
                <svg width="18" height="14" fill="none" stroke="#fff"><path d="M6 2.500h11v8H4.500V6M10.500 10.500v3M7 13.500h7M.5.500h4v4h-4zM2.500 4.500v9" /></svg>
                <svg width="17" height="14" fill="none" stroke="#fff"><path d="M.5 4.500h2l4-3.500v12l-4-3.500h-2zM8.500 5q2 2 0 4M10.500 3q3.500 4 0 8" /><path d="M13 1q4.500 6 0 12" stroke="#777" /></svg>
                <Language>FRA</Language>
                <Clock>17:28<br />02/06/2017</Clock>
                <Notifications aria-label="Notifications">
                    <svg width="16" height="16" fill="none" stroke="#fff" strokeWidth="1.2"><path d="M.8.8h14.400v11.200H10.500L8 14.500 5.500 12H.8z" /></svg>
                </Notifications>
            </Tray>
        </Taskbar>
    </Screen>
);

export default App;
